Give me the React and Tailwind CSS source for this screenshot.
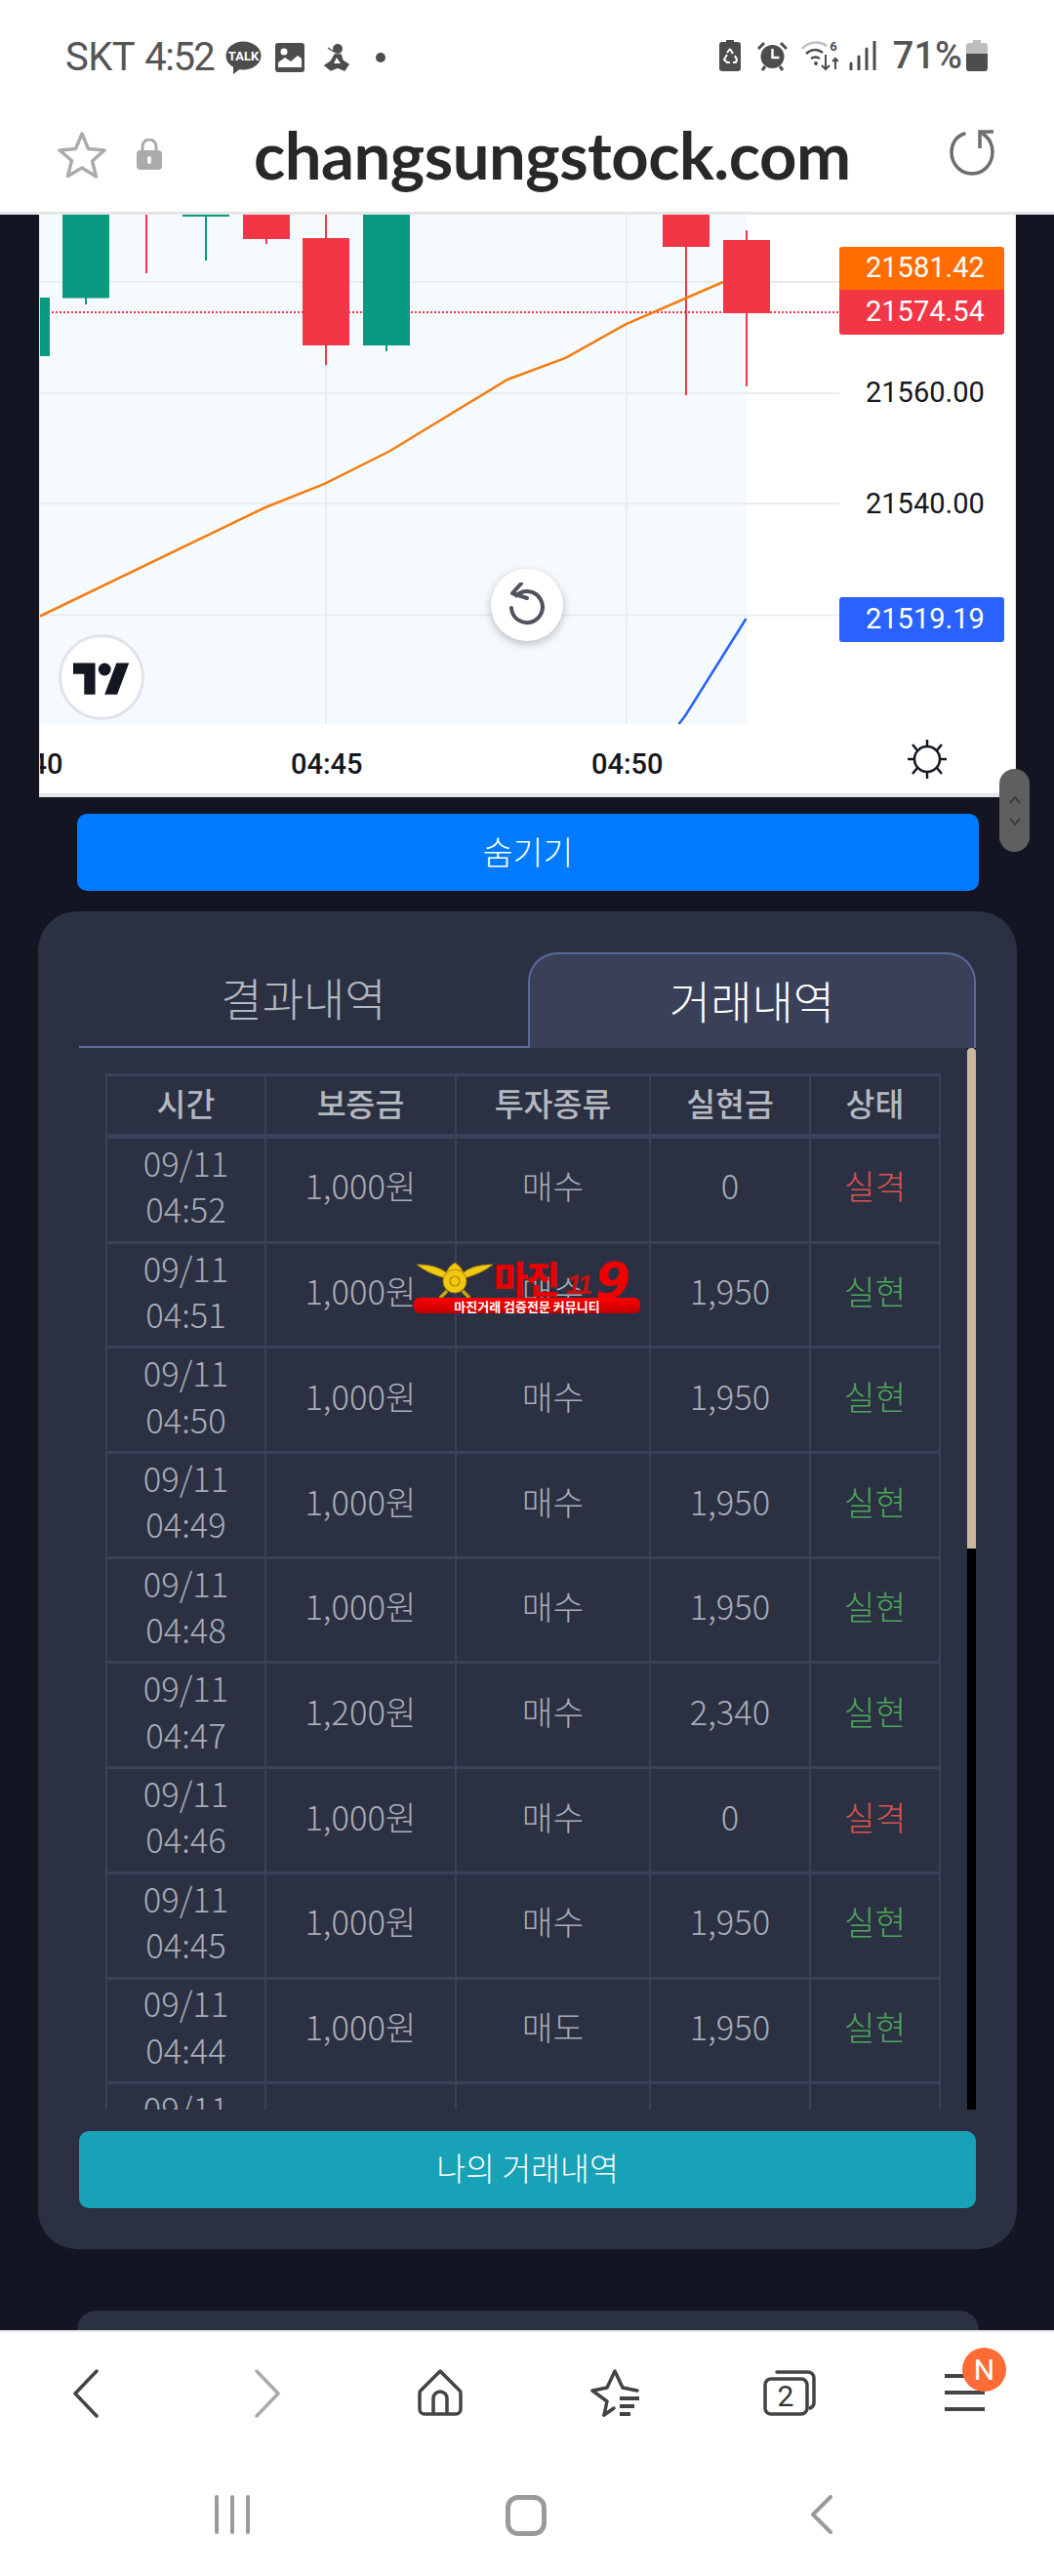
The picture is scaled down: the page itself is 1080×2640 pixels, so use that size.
import React from "react";

const rows = [
  ["04:52", "1,000원", "매수", "0", "실격"],
  ["04:51", "1,000원", "매수", "1,950", "실현"],
  ["04:50", "1,000원", "매수", "1,950", "실현"],
  ["04:49", "1,000원", "매수", "1,950", "실현"],
  ["04:48", "1,000원", "매수", "1,950", "실현"],
  ["04:47", "1,200원", "매수", "2,340", "실현"],
  ["04:46", "1,000원", "매수", "0", "실격"],
  ["04:45", "1,000원", "매수", "1,950", "실현"],
  ["04:44", "1,000원", "매도", "1,950", "실현"],
  ["04:43", "1,000원", "매수", "1,950", "실현"],
];
const cols = "grid grid-cols-[165px_195px_199px_164px_133px]";
const cell = "flex items-center justify-center border-r-2 border-[#3a4158] text-center";

function StatusBar() {
  return (
    <div className="flex h-[96px] items-start justify-between pl-[67px] pr-[68px] pt-[36px] text-[#555555]">
      <div className="flex items-center">
        <span className="font-['Roboto',sans-serif] text-[40px] leading-[46px] tracking-[-0.5px]">SKT</span>
        <span className="ml-[10px] font-['Roboto',sans-serif] text-[40px] leading-[46px] tracking-[-1.5px]">4:52</span>
        <svg className="ml-[12px]" width="37" height="34" viewBox="0 0 37 34">
          <ellipse cx="18.5" cy="15" rx="18" ry="14.5" fill="#4d4d4d" />
          <path d="M8 26l0 8 8-6z" fill="#4d4d4d" />
          <text x="18.5" y="20" textAnchor="middle" fontSize="13" fontWeight="700" fill="#fff" fontFamily="Roboto, sans-serif">TALK</text>
        </svg>
        <svg className="ml-[14px]" width="30" height="30" viewBox="0 0 30 30">
          <rect width="30" height="30" rx="3" fill="#4d4d4d" />
          <circle cx="9" cy="9" r="3.5" fill="#fff" />
          <path d="M3 25v-5l7-5 6 4 7-6 4 3v9z" fill="#fff" />
        </svg>
        <svg className="ml-[19px]" width="28" height="30" viewBox="0 0 28 30">
          <circle cx="15" cy="6" r="5" fill="#4d4d4d" />
          <path d="M11 9L5 5M12 12h6l2 6 6 4-4 6-7-3-7 3-6-5 6-4 2-3z" fill="#4d4d4d" stroke="#4d4d4d" strokeWidth="1.5" />
          <path d="M14 15l-3 6h7z" fill="#fff" />
        </svg>
        <span className="ml-[26px] h-[10px] w-[10px] rounded-full bg-[#4d4d4d]" />
      </div>
      <div className="flex items-center">
        <svg width="22" height="32" viewBox="0 0 22 32">
          <path d="M7 0h8v2h4a3 3 0 0 1 3 3v24a3 3 0 0 1-3 3H3a3 3 0 0 1-3-3V5a3 3 0 0 1 3-3h4z" fill="#4d4d4d" />
          <path d="M11 9l3 5M8 15l-3 5 3 3h3M14 23h3l1-3-2-4M8 13l3-4" stroke="#fff" strokeWidth="2" fill="none" />
        </svg>
        <svg className="ml-[17px]" width="31" height="31" viewBox="0 0 31 31">
          <circle cx="15.5" cy="16" r="12" fill="#4d4d4d" />
          <path d="M15.5 8v9h7" stroke="#fff" strokeWidth="2.5" fill="none" />
          <path d="M1 8l6-6M30 8l-6-6M5 30l3-4M26 30l-3-4" stroke="#4d4d4d" strokeWidth="3" />
        </svg>
        <svg className="ml-[14px]" width="38" height="32" viewBox="0 0 38 32">
          <path d="M1 9C8 1 19 1 26 6" stroke="#bdbdbd" strokeWidth="2.5" fill="none" />
          <path d="M5 14c5-5 12-5 17-1M10 19c3-2 6-2 9 0" stroke="#4d4d4d" strokeWidth="2.5" fill="none" />
          <circle cx="15" cy="24" r="2" fill="#4d4d4d" />
          <path d="M25 15v15M21 26l4 4 4-4M35 30V19M32 22l3-3 3 3" stroke="#4d4d4d" strokeWidth="2" fill="none" />
          <text x="33" y="11" textAnchor="middle" fontSize="13" fontWeight="700" fill="#4d4d4d" fontFamily="Roboto, sans-serif">6</text>
        </svg>
        <svg className="ml-[11px]" width="29" height="30" viewBox="0 0 29 30">
          <path d="M2 23v6M10 16v13M18 8v21M26 1v28" stroke="#4d4d4d" strokeWidth="3" strokeLinecap="round" />
        </svg>
        <span className="ml-[16px] font-['Roboto',sans-serif] text-[38px] font-medium leading-[42px]">71%</span>
        <svg className="ml-[4px]" width="22" height="32" viewBox="0 0 22 32">
          <path d="M7 0h8v3h4a3 3 0 0 1 3 3v9H0V6a3 3 0 0 1 3-3h4z" fill="#bdbdbd" />
          <path d="M0 14h22v15a3 3 0 0 1-3 3H3a3 3 0 0 1-3-3z" fill="#4d4d4d" />
        </svg>
      </div>
    </div>
  );
}

function UrlBar() {
  return (
    <div className="relative flex h-[124px] items-start border-b-[3px] border-[#e5e5e5] pt-[38px] pl-[59px]">
      <svg width="50" height="50" viewBox="0 0 50 50">
        <path d="M25 3l6.5 15.5 16.5 1.500-12.500 11 4 16L25 38l-14.500 8.500 4-16L2 20l16.500-1.500z" fill="none" stroke="#ababab" strokeWidth="3.500" strokeLinejoin="round" />
      </svg>
      <svg className="ml-[31px] mt-[8px]" width="26" height="32" viewBox="0 0 26 32">
        <path d="M6 13V8a7 7 0 0 1 14 0v5" fill="none" stroke="#ababab" strokeWidth="3" />
        <rect y="12" width="26" height="20" rx="4" fill="#ababab" />
        <rect x="11" y="18" width="4" height="8" rx="2" fill="#fff" />
      </svg>
      <span className="ml-[94px] -mt-[15px] font-['Lato',sans-serif] text-[67px] font-bold leading-[78px] tracking-[-0.5px] text-[#282828]">changsungstock.com</span>
      <svg className="absolute left-[973px] top-[36px]" width="47" height="48" viewBox="0 0 47 48">
        <path d="M15 5C6 8 2 16 2 24c0 12 9 22 21 22s21-10 21-22c0-8-4-15-10-19" fill="none" stroke="#6e6e6e" strokeWidth="3.500" strokeLinecap="round" />
        <path d="M31 20V3h14" fill="none" stroke="#6e6e6e" strokeWidth="3.500" />
      </svg>
    </div>
  );
}

function Chart() {
  return (
    <div className="relative ml-[40px] h-[597px] w-[1001px] overflow-hidden border-x-[1px] border-b-[4px] border-[#e3e5e8] bg-white font-['Roboto',sans-serif]">
      <svg className="absolute left-[-41px] top-[-220px]" width="1080" height="820" viewBox="0 0 1080 820">
        <rect x="41" y="220" width="724" height="522" fill="#f5faff" />
        <path d="M41 289H860M41 403H860M41 516H860M41 630.500H860M334 220V742M642 220V742" stroke="#e9edf1" strokeWidth="2" />
        <path d="M41 320H860" stroke="#f23645" strokeWidth="2" strokeDasharray="2 2" />
        <path d="M88 300V312M396 350V360" stroke="#089981" strokeWidth="2" />
        <path d="M211 220V267" stroke="#089981" strokeWidth="2" />
        <rect x="41" y="305" width="10" height="60" fill="#089981" />
        <rect x="64" y="220" width="48" height="85.500" fill="#089981" />
        <rect x="187" y="220" width="48" height="2" fill="#089981" />
        <rect x="372" y="220" width="48" height="134" fill="#089981" />
        <path d="M150 220V280M273 240V250M334 220V374M703 220V405M765 236V396" stroke="#f23645" strokeWidth="2" />
        <rect x="249" y="220" width="48" height="25" fill="#f23645" />
        <rect x="310" y="244" width="48" height="110" fill="#f23645" />
        <rect x="679" y="220" width="48" height="33" fill="#f23645" />
        <rect x="741" y="246" width="48" height="75" fill="#f23645" />
        <path d="M41 631.500L272 520L333 495.600L399 462.500L520 389L580 366.600L640.500 332.600L741 289" fill="none" stroke="#f57c10" strokeWidth="2.500" />
        <path d="M695.600 742L702.500 733L764.500 634" fill="none" stroke="#2962ff" strokeWidth="2.500" />
      </svg>

      <div className="absolute left-[819px] top-[33px] flex h-[44px] w-[169px] items-center rounded-t-[3px] bg-[#ff6d00] pl-[27px] text-[29px] text-white">21581.42</div>
      <div className="absolute left-[819px] top-[77px] flex h-[46px] w-[169px] items-center rounded-b-[3px] bg-[#f23645] pl-[27px] text-[29px] text-white">21574.54</div>
      <div className="absolute left-[846px] top-[162px] text-[29px] leading-[40px] text-[#131722]">21560.00</div>
      <div className="absolute left-[846px] top-[276px] text-[29px] leading-[40px] text-[#131722]">21540.00</div>
      <div className="absolute left-[819px] top-[392px] flex h-[46px] w-[169px] items-center rounded-[3px] bg-[#2962ff] pl-[27px] text-[29px] text-white">21519.19</div>

      <div className="absolute left-[-50px] top-[543px] text-[29px] font-medium leading-[40px] text-[#131722]">04:40</div>
      <div className="absolute left-[257px] top-[543px] text-[29px] font-medium leading-[40px] text-[#131722]">04:45</div>
      <div className="absolute left-[565px] top-[543px] text-[29px] font-medium leading-[40px] text-[#131722]">04:50</div>

      <svg className="absolute left-[889px] top-[538px]" width="40" height="40" viewBox="0 0 40 40">
        <circle cx="20" cy="20" r="13" fill="none" stroke="#131722" strokeWidth="2.500" />
        <path d="M20 0v7M20 33v7M5 5l5 6M35 5l-5 6M5 35l5-6M35 35l-5-6M0 20h7M33 20h7" stroke="#131722" strokeWidth="2.500" />
      </svg>

      <div className="absolute left-[462px] top-[363px] flex h-[74px] w-[74px] items-center justify-center rounded-full bg-white shadow-[0_3px_10px_rgba(0,0,0,0.25)]">
        <svg width="40" height="46" viewBox="0 0 40 46">
          <path d="M9 13.500A16 16 0 1 1 4 26" fill="none" stroke="#50535e" strokeWidth="4" strokeLinecap="round" />
          <path d="M14 1L5 11l15 5" fill="none" stroke="#50535e" strokeWidth="4" strokeLinecap="round" strokeLinejoin="round" />
        </svg>
      </div>

      <div className="absolute left-[19px] top-[430px] flex h-[88px] w-[88px] items-center justify-center rounded-full border-[3px] border-[#e0e3eb] bg-white">
        <svg width="58" height="42" viewBox="0 0 36 26">
          <path d="M14 24H7V11H0V4h14zM28 24h-8L27.500 4h8z" fill="#131722" />
          <circle cx="20" cy="8" r="4" fill="#131722" />
        </svg>
      </div>
    </div>
  );
}

function Row({ r }) {
  const pass = r[4] === "실현";
  return (
    <div className={`${cols} h-[107.700px] border-b-[3px] border-[#3a4158] text-[34.500px] font-light text-[#a8adb8]`}>
      <div className={`${cell} border-l-2 flex-col pb-[8px] leading-[47.500px]`}>
        <span>09/11</span>
        <span>{r[0]}</span>
      </div>
      <div className={`${cell} pb-[8px]`}>{r[1]}</div>
      <div className={`${cell} pb-[8px]`}>{r[2]}</div>
      <div className={`${cell} pb-[8px]`}>{r[3]}</div>
      <div className={`${cell} pb-[8px] ${pass ? "text-[#4ca65a]" : "text-[#d9534f]"}`}>{r[4]}</div>
    </div>
  );
}

function Panel() {
  return (
    <div className="relative ml-[39px] mt-[21.500px] h-[1370.500px] w-[1003px] rounded-[40px] bg-[#2b3042] px-[42px] pt-[42px] font-['Noto_Sans_CJK_KR','Noto_Sans',sans-serif]">
      <div className="flex h-[98px]">
        <div className="flex w-[460px] items-center justify-center border-b-2 border-[#5a6a9a] pb-[6px] text-[46px] font-light text-[#b4b8c0]">결과내역</div>
        <div className="flex w-[459px] items-center justify-center rounded-t-[30px] border-x-2 border-t-2 border-[#5a6a9a] bg-[#394058] pb-[4px] text-[46px] font-light text-white">거래내역</div>
      </div>
      <div className="flex h-[1088px] w-[919px]">
        <div className="h-full w-[910px] overflow-hidden pl-[27px] pt-[26px]">
          <div className="w-[856px]">
            <div className={`${cols} h-[66px] border-y-[4px] border-t-[3px] border-[#3a4158] text-[32.500px] font-medium text-[#b4b8c0]`}>
              {["시간", "보증금", "투자종류", "실현금", "상태"].map((h, i) => (
                <div key={h} className={`${cell} pb-[4px] ${i === 0 ? "border-l-2" : ""}`}>{h}</div>
              ))}
            </div>
            <div className="h-[1px] bg-[#3a4158]" />
            {rows.map((r, i) => <Row key={i} r={r} />)}
          </div>
        </div>
        <div className="h-full w-[9px] bg-black">
          <div className="h-[513px] rounded-t-[4px] bg-[#c9b79c]" />
        </div>
      </div>
      <div className="mt-[22px] flex h-[78.500px] w-[919px] items-center justify-center rounded-[10px] bg-[#17a2b8] pb-[3px] text-[32.500px] font-light text-white">나의 거래내역</div>

      <div className="absolute left-[385px] top-[359px] h-[54px] w-[233px]">
        <svg className="absolute left-[3px] top-[1px]" width="78" height="36" viewBox="0 0 78 36">
          <path d="M0 2C12 2 22 4 30 10L34 4l5-4 5 4 4 6C56 4 66 2 78 2C70 8 62 12 52 15L39 18 26 15C16 12 8 8 0 2z" fill="#f2c811" stroke="#a8860a" strokeWidth="0.800" />
          <circle cx="39" cy="19" r="12" fill="#f2c811" stroke="#a8860a" strokeWidth="1" />
          <circle cx="39" cy="19" r="5" fill="none" stroke="#a8860a" strokeWidth="1.200" />
          <path d="M24 36l7-7M54 36l-7-7" stroke="#c9a50e" strokeWidth="3.500" />
        </svg>
        <span className="absolute left-[82px] top-[-6px] font-['Noto_Sans_CJK_KR',sans-serif] text-[38px] font-black leading-[44px] tracking-[-2px] text-[#e60000]">마진</span>
        <span className="absolute left-[156px] top-[10px] font-['Liberation_Sans',sans-serif] text-[28px] font-bold italic leading-[28px] tracking-[-2px] text-[#c81010]">11</span>
        <span className="absolute left-[186px] top-[-6px] font-['DejaVu_Sans',sans-serif] text-[52px] font-bold italic leading-[52px] text-[#f00000]">9</span>
        <div className="absolute left-0 top-[37px] flex h-[16px] w-[232px] items-center justify-center rounded-[6px] bg-gradient-to-b from-[#ff0000] to-[#c00000] text-[13px] font-bold leading-none text-white">마진거래 검증전문 커뮤니티</div>
      </div>
    </div>
  );
}

function BottomBar() {
  return (
    <div className="relative h-[252px] border-t-2 border-[#e5e7ea] bg-white">
      <div className="flex h-[118px] items-start pt-[38px]">
        <svg className="ml-[74px]" width="28" height="50" viewBox="0 0 28 50">
          <path d="M25 2L3 25l22 23" fill="none" stroke="#444" strokeWidth="3.500" strokeLinecap="round" strokeLinejoin="round" />
        </svg>
        <svg className="ml-[158px]" width="28" height="50" viewBox="0 0 28 50">
          <path d="M3 2l22 23L3 48" fill="none" stroke="#ababab" strokeWidth="3.500" strokeLinecap="round" strokeLinejoin="round" />
        </svg>
        <svg className="ml-[140px]" width="46" height="48" viewBox="0 0 46 48">
          <path d="M23 2L3 22a4 4 0 0 0-1 3v16a5 5 0 0 0 5 5h32a5 5 0 0 0 5-5V25a4 4 0 0 0-1-3z" fill="none" stroke="#444" strokeWidth="3.500" strokeLinejoin="round" />
          <path d="M16 46V30a7 7 0 0 1 14 0v16" fill="none" stroke="#444" strokeWidth="3.500" />
        </svg>
        <svg className="ml-[131px]" width="52" height="50" viewBox="0 0 52 50">
          <path d="M14 47l3-14L2 22l15-3 8-17 8 17 15 3" fill="none" stroke="#444" strokeWidth="3.500" strokeLinejoin="round" strokeLinecap="round" />
          <path d="M14 47l10-7" stroke="#444" strokeWidth="3.500" strokeLinecap="round" />
          <path d="M30 30h20M30 38h15M30 46h11" stroke="#444" strokeWidth="4" />
        </svg>
        <svg className="ml-[125px]" width="54" height="48" viewBox="0 0 54 48">
          <path d="M14 3h32a6 6 0 0 1 6 6v26a6 6 0 0 1-4 5" fill="none" stroke="#444" strokeWidth="3.500" strokeLinecap="round" />
          <rect x="2" y="10" width="43" height="36" rx="6" fill="none" stroke="#444" strokeWidth="3.500" />
          <text x="23" y="38" textAnchor="middle" fontSize="30" fill="#333" fontFamily="Roboto, sans-serif">2</text>
        </svg>
        <div className="ml-[132px] mt-[5px] flex w-[41px] flex-col gap-[13px]">
          <span className="h-[4px] bg-[#444]" />
          <span className="h-[4px] bg-[#444]" />
          <span className="h-[4px] bg-[#444]" />
        </div>
      </div>
      <div className="absolute left-[986px] top-[16px] flex h-[45px] w-[45px] items-center justify-center rounded-full bg-[#ff6b35] font-['Roboto',sans-serif] text-[30px] leading-none text-white">N</div>
      <div className="mt-[49px] flex items-start">
        <div className="ml-[220px] flex h-[40px] gap-[12px]">
          <span className="w-[4px] rounded-full bg-[#9a9a9a]" />
          <span className="w-[4px] rounded-full bg-[#9a9a9a]" />
          <span className="w-[4px] rounded-full bg-[#9a9a9a]" />
        </div>
        <div className="ml-[262px] h-[42px] w-[42px] rounded-[13px] border-[5px] border-[#9a9a9a]" />
        <svg className="ml-[270px]" width="24" height="40" viewBox="0 0 24 40">
          <path d="M21 2L3 20l18 18" fill="none" stroke="#9a9a9a" strokeWidth="4" strokeLinecap="round" strokeLinejoin="round" />
        </svg>
      </div>
    </div>
  );
}

export default function App() {
  return (
    <div className="flex h-[2640px] w-[1080px] flex-col overflow-hidden bg-white">
      <StatusBar />
      <UrlBar />
      <main className="relative flex-1 overflow-hidden bg-[#131622] font-['Noto_Sans_CJK_KR','Noto_Sans',sans-serif]">
        <Chart />
        <button className="ml-[79px] mt-[17px] flex h-[78.500px] w-[924px] items-center justify-center rounded-[10px] bg-[#007bff] pb-[2px] text-[33.500px] font-light text-white">숨기기</button>
        <Panel />
        <div className="ml-[79px] mt-[63.500px] h-[30px] w-[924px] rounded-t-[20px] bg-[#2b3042]" />
        <div className="absolute left-[1024px] top-[568px] flex h-[85px] w-[31px] flex-col items-center justify-center gap-[10px] rounded-full bg-[#5f5f5f]">
          <svg width="14" height="12" viewBox="0 0 14 12"><path d="M2 9l5-6 5 6" fill="none" stroke="#333" strokeWidth="1.500" /></svg>
          <svg width="14" height="12" viewBox="0 0 14 12"><path d="M2 3l5 6 5-6" fill="none" stroke="#333" strokeWidth="1.500" /></svg>
        </div>
      </main>
      <BottomBar />
    </div>
  );
}
